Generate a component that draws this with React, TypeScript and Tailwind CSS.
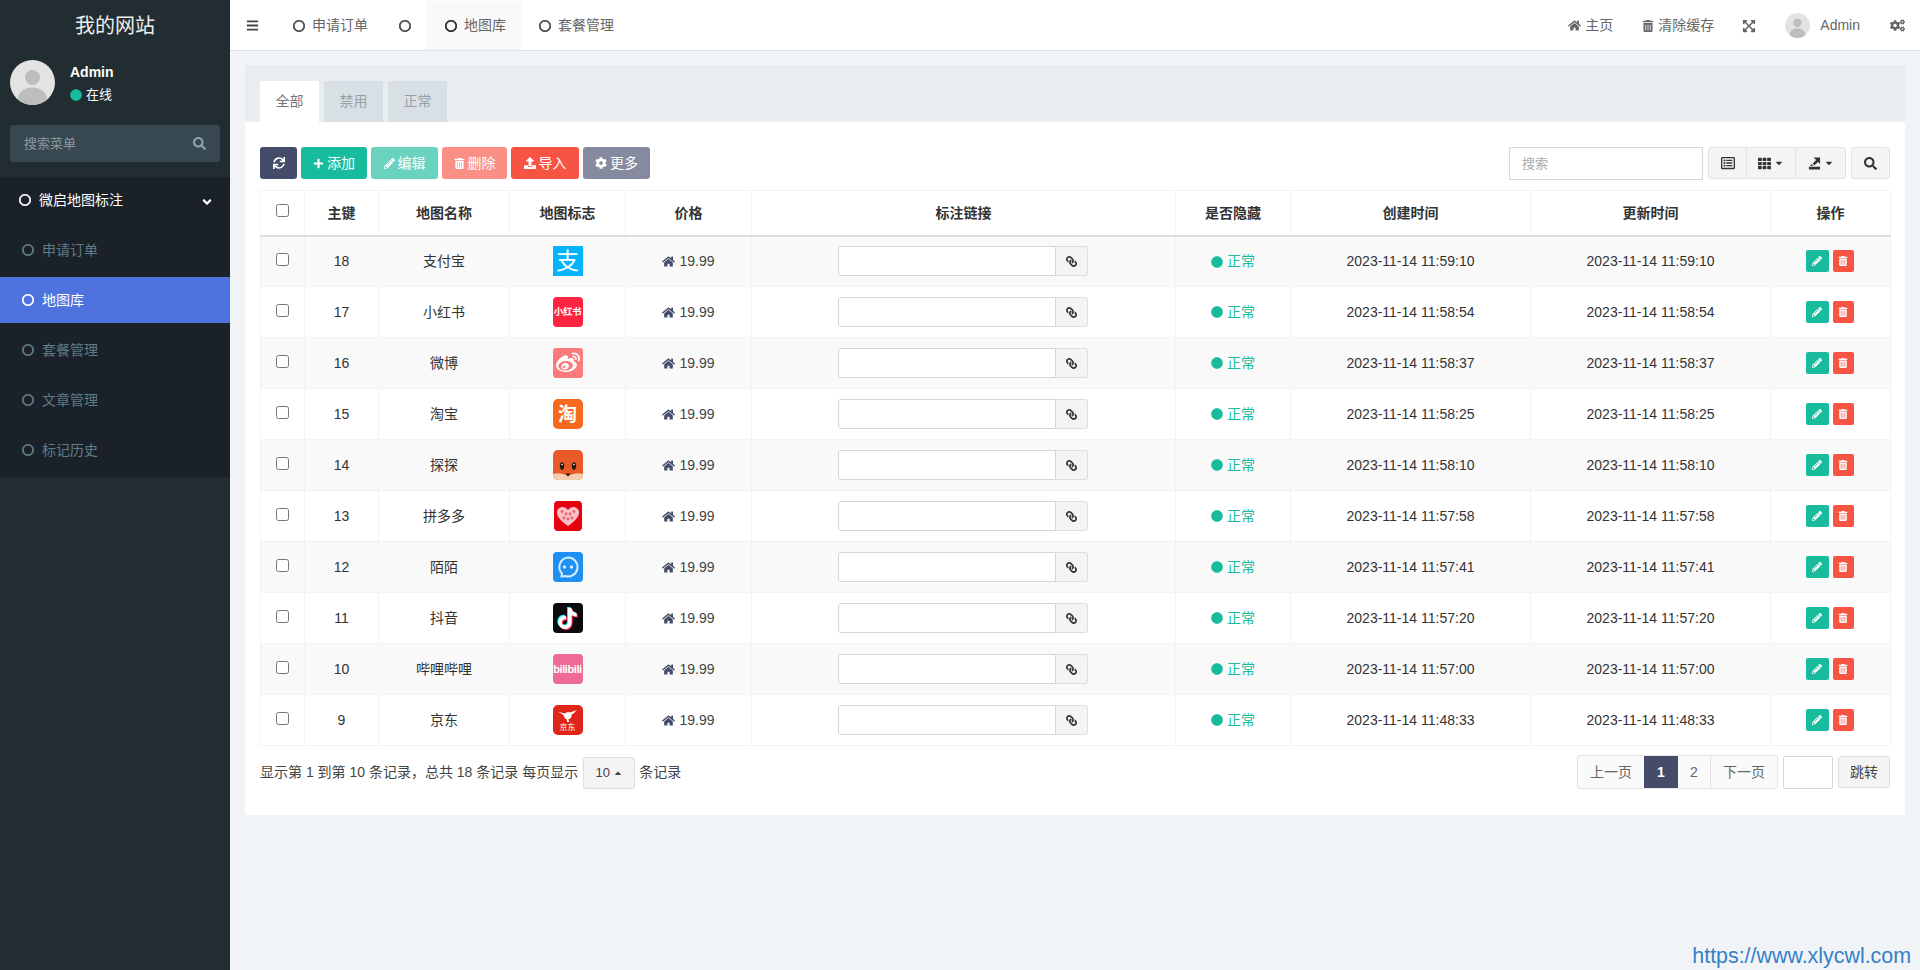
import React from 'react';
import {
  FaAngleDown,
  FaBars,
  FaCaretDown,
  FaCaretUp,
  FaCircle,
  FaCog,
  FaCogs,
  FaExpandArrowsAlt,
  FaHome,
  FaLink,
  FaPencilAlt,
  FaPlus,
  FaRegCircle,
  FaRegListAlt,
  FaSearch,
  FaSync,
  FaTh,
  FaTiktok,
  FaTrashAlt,
  FaUpload,
  FaWeibo,
} from 'react-icons/fa';

const subMenu = ['申请订单', '地图库', '套餐管理', '文章管理', '标记历史'];

const rows = [
  { id: 18, name: '支付宝', logo: 'alipay', time: '2023-11-14 11:59:10' },
  { id: 17, name: '小红书', logo: 'xhs', time: '2023-11-14 11:58:54' },
  { id: 16, name: '微博', logo: 'weibo', time: '2023-11-14 11:58:37' },
  { id: 15, name: '淘宝', logo: 'taobao', time: '2023-11-14 11:58:25' },
  { id: 14, name: '探探', logo: 'tantan', time: '2023-11-14 11:58:10' },
  { id: 13, name: '拼多多', logo: 'pdd', time: '2023-11-14 11:57:58' },
  { id: 12, name: '陌陌', logo: 'momo', time: '2023-11-14 11:57:41' },
  { id: 11, name: '抖音', logo: 'douyin', time: '2023-11-14 11:57:20' },
  { id: 10, name: '哔哩哔哩', logo: 'bili', time: '2023-11-14 11:57:00' },
  { id: 9, name: '京东', logo: 'jd', time: '2023-11-14 11:48:33' },
];

function Avatar({ className }: { className: string }) {
  return (
    <svg viewBox="0 0 45 45" className={`rounded-full shrink-0 ${className}`}>
      <rect width="45" height="45" fill="#e3e3e3" />
      <circle cx="22.5" cy="17.5" r="7.5" fill="#bdbdbd" />
      <ellipse cx="22.5" cy="39" rx="14.5" ry="11.5" fill="#bdbdbd" />
    </svg>
  );
}

function ExportIcon() {
  return (
    <svg viewBox="0 0 14 14" className="w-[13px] h-[14px]" fill="#333">
      <path d="M1 11h12v3H1z" />
      <path d="M6 1h7v7l-2.2-2.2L7 9.5 5 7.5l3.8-3.8z" />
      <path d="M2 10l2-2 2 2z" />
    </svg>
  );
}

function Logo({ type }: { type: string }) {
  const box = 'w-[30px] h-[30px] mx-auto flex items-center justify-center text-white overflow-hidden';
  if (type === 'alipay') {
    return <div className={`${box} bg-[#06b4fd] text-[23px] leading-none`}>支</div>;
  }
  if (type === 'xhs') {
    return <div className={`${box} bg-[#ff2442] rounded-[4px] text-[9.5px] font-bold tracking-[-0.3px]`}>小红书</div>;
  }
  if (type === 'weibo') {
    return (
      <div className={`${box} bg-[#fb7b7d] rounded-[3px]`}>
        <FaWeibo size={24} />
      </div>
    );
  }
  if (type === 'taobao') {
    return <div className={`${box} bg-[#f7691e] rounded-[5px] text-[19px] font-bold leading-none`}>淘</div>;
  }
  if (type === 'tantan') {
    return (
      <svg viewBox="0 0 30 30" className="w-[30px] h-[30px] mx-auto rounded-[5px]">
        <rect width="30" height="30" fill="#e95a28" />
        <path d="M0 24 Q8 22 15 26 Q22 22 30 24 L30 30 L0 30Z" fill="#f2cfae" />
        <ellipse cx="9" cy="16" rx="2.2" ry="3.8" fill="#2c1a14" />
        <ellipse cx="21" cy="16" rx="2.2" ry="3.8" fill="#2c1a14" />
        <circle cx="9" cy="14.5" r="0.8" fill="#fff" />
        <circle cx="21" cy="14.5" r="0.8" fill="#fff" />
        <path d="M12.5 23.5 h5 l-2.5 3z" fill="#2c1a14" />
      </svg>
    );
  }
  if (type === 'pdd') {
    return (
      <svg viewBox="0 0 28 30" className="w-[28px] h-[30px] mx-auto rounded-[4px]">
        <rect width="28" height="30" fill="#e60012" />
        <path d="M14 25 C7 20 3 16 3 11.5 C3 8 6 6 8.5 6 C11 6 13 7.5 14 9 C15 7.5 17 6 19.5 6 C22 6 25 8 25 11.5 C25 16 21 20 14 25Z" fill="#f7c0c6" />
        <circle cx="8" cy="10.5" r="1.4" fill="#e60012" opacity="0.5" />
        <circle cx="12" cy="13" r="1.4" fill="#e60012" opacity="0.5" />
        <circle cx="16" cy="13" r="1.4" fill="#e60012" opacity="0.5" />
        <circle cx="20" cy="10.5" r="1.4" fill="#e60012" opacity="0.5" />
        <circle cx="10" cy="17" r="1.4" fill="#e60012" opacity="0.5" />
        <circle cx="14" cy="18" r="1.4" fill="#e60012" opacity="0.5" />
        <circle cx="18" cy="17" r="1.4" fill="#e60012" opacity="0.5" />
      </svg>
    );
  }
  if (type === 'momo') {
    return (
      <svg viewBox="0 0 30 30" className="w-[30px] h-[30px] mx-auto rounded-[4px]">
        <rect width="30" height="30" fill="#1e90f2" />
        <path d="M15 5.5 a9.5 9.5 0 1 1 -3 18.5 l-3.5 0.5 l0.5 -3 A9.5 9.5 0 0 1 15 5.5z" fill="none" stroke="#d5ecff" strokeWidth="2" />
        <circle cx="11.5" cy="15" r="1.7" fill="#d5ecff" />
        <circle cx="18.5" cy="15" r="1.7" fill="#d5ecff" />
      </svg>
    );
  }
  if (type === 'douyin') {
    return (
      <div className={`${box} bg-[#0b0b0f] rounded-[4px] relative`}>
        <FaTiktok size={21} className="absolute text-[#25f4ee] left-[3.5px] top-[3.5px]" />
        <FaTiktok size={21} className="absolute text-[#fe2c55] left-[5.5px] top-[5.5px]" />
        <FaTiktok size={21} className="absolute text-white left-[4.5px] top-[4.5px]" />
      </div>
    );
  }
  if (type === 'bili') {
    return (
      <div className={`${box} bg-[#ee6b95] rounded-[4px] text-[11px] font-bold tracking-[-0.4px] text-[#fbdde7]`}>
        bilibili
      </div>
    );
  }
  return (
    <div className={`${box} flex-col bg-[#e1251b] rounded-[5px]`}>
      <svg viewBox="0 0 22 14" className="w-[19px] h-[12px] mt-[2px]" fill="#fff">
        <path d="M0 2 L8 4 Q11 1 14 3 L22 0 L18 4 L16 5 Q16 10 12 11 L13 14 L10.5 14 L10 11 Q7 10 7 7 L5 5z" />
      </svg>
      <span className="text-[8px] leading-[10px] mt-[1px]">京东</span>
    </div>
  );
}

export default function App() {
  return (
    <div className="relative flex h-screen overflow-hidden bg-[#f1f4f6] text-[14px] text-[#333] [font-family:'Liberation_Sans','Noto_Sans_CJK_SC',sans-serif]">
      {/* Sidebar */}
      <aside className="w-[230px] shrink-0 bg-[#222d32] flex flex-col">
        <div className="h-[50px] pt-[1px] flex items-center justify-center text-[20px] text-[#eee]">我的网站</div>

        <div className="flex items-start h-[62px] pl-[10px] pt-[10px]">
          <Avatar className="w-[45px] h-[45px]" />
          <div className="ml-[15px] pt-[2px] text-white">
            <div className="font-bold text-[14px] leading-[20px]">Admin</div>
            <div className="flex items-center text-[13px] leading-[20px] mt-[3px]">
              <FaCircle size={12} className="text-[#18bc9c] mr-[4px]" />
              在线
            </div>
          </div>
        </div>

        <div className="mx-[10px] mt-[13px] h-[37px] rounded-[3px] bg-[#374850] flex items-center justify-between px-[14px] text-[13px] text-[#8a9aa2]">
          <span>搜索菜单</span>
          <FaSearch size={13} className="text-[#94a3aa]" />
        </div>

        <nav className="mt-[15px] bg-[#1a2128] pb-[4px]">
          <div className="h-[46px] flex items-center pl-[19px] pr-[16px] text-white text-[14px]">
            <FaRegCircle size={12} className="mr-[8px] stroke-[30]" />
            <span className="flex-1">微启地图标注</span>
            <FaAngleDown size={14} className="mt-[4px]" />
          </div>
          <div className="flex flex-col gap-[4px] mt-[4px]">
            {subMenu.map(item => {
              const active = item === '地图库';
              return (
                <div
                  key={item}
                  className={`h-[46px] flex items-center pl-[22px] ${
                    active ? 'bg-[#4e73df] text-white' : 'text-[#5f7d88]'
                  }`}
                >
                  <FaRegCircle size={12} className="mr-[8px] stroke-[30]" />
                  {item}
                </div>
              );
            })}
          </div>
        </nav>
      </aside>

      <div className="flex-1 flex flex-col min-w-0">
        {/* Top bar */}
        <header className="h-[51px] shrink-0 bg-white border-b border-[#dfe3e6] flex items-center text-[#666]">
          <div className="w-[45px] pl-[16px] text-[#444]">
            <FaBars size={13} />
          </div>
          <div className="flex h-full pt-[1px]">
            <div className="flex items-center pl-[18px] pr-[15px]">
              <FaRegCircle size={12} className="mr-[7px] text-[#444] stroke-[30]" />
              申请订单
            </div>
            <div className="flex items-center pl-[16px] pr-[15px]">
              <FaRegCircle size={12} className="text-[#444] stroke-[30]" />
            </div>
            <div className="flex items-center pl-[19px] pr-[15px] bg-[#f9f9f9]">
              <FaRegCircle size={12} className="mr-[7px] text-[#222] stroke-[30]" />
              地图库
            </div>
            <div className="flex items-center pl-[18px] pr-[15px]">
              <FaRegCircle size={12} className="mr-[7px] text-[#444] stroke-[30]" />
              套餐管理
            </div>
          </div>
          <div className="ml-auto flex items-center pr-[15px] pt-[1px]">
            <FaHome size={13} className="mr-[4px]" />
            主页
            <FaTrashAlt size={12} className="ml-[29px] mr-[4px]" />
            清除缓存
            <FaExpandArrowsAlt size={14} className="ml-[28px]" />
            <Avatar className="w-[25px] h-[25px] ml-[29px]" />
            <span className="ml-[10px]">Admin</span>
            <FaCogs size={15} className="ml-[30px]" />
          </div>
        </header>

        {/* Content */}
        <main className="p-[15px] pt-[14px]">
          <div className="bg-white rounded-[2px] h-[750px] flex flex-col">
            <div className="h-[57px] bg-[#e8edf0] pl-[15px] flex items-end gap-[5px] text-[14px]">
              <div className="w-[59px] h-[41px] bg-white text-[#777] flex items-center justify-center">全部</div>
              <div className="w-[59px] h-[41px] bg-[#d8e0e5] text-[#95a1a8] flex items-center justify-center">禁用</div>
              <div className="w-[59px] h-[41px] bg-[#d8e0e5] text-[#95a1a8] flex items-center justify-center">正常</div>
            </div>

            <div className="px-[15px] pt-[25px]">
              {/* Toolbar */}
              <div className="flex items-start h-[33px] gap-[4px] text-white">
                <button className="w-[37px] h-[32px] rounded-[3px] bg-[#444c69] flex items-center justify-center">
                  <FaSync size={12} />
                </button>
                <button className="w-[66px] h-[32px] rounded-[3px] bg-[#18bc9c] flex items-center justify-center gap-[3px]">
                  <FaPlus size={11} />
                  添加
                </button>
                <button className="w-[67px] h-[32px] rounded-[3px] bg-[#18bc9c]/65 flex items-center justify-center gap-[3px]">
                  <FaPencilAlt size={11} />
                  编辑
                </button>
                <button className="w-[65px] h-[32px] rounded-[3px] bg-[#f75444]/65 flex items-center justify-center gap-[3px]">
                  <FaTrashAlt size={11} />
                  删除
                </button>
                <button className="w-[68px] h-[32px] rounded-[3px] bg-[#f75444] flex items-center justify-center gap-[3px]">
                  <FaUpload size={12} />
                  导入
                </button>
                <button className="w-[67px] h-[32px] rounded-[3px] bg-[#858a9e] flex items-center justify-center gap-[3px]">
                  <FaCog size={12} />
                  更多
                </button>

                <input
                  placeholder="搜索"
                  className="ml-auto w-[194px] h-[33px] border border-[#d2d6de] px-[12px] text-[13px] outline-none placeholder:text-[#aaa]"
                />
                <div className="flex h-[32px] ml-[1px] rounded-[3px] border border-[#e3e3e3] bg-[#f4f4f4] text-[#333]">
                  <div className="w-[38px] flex items-center justify-center border-r border-[#e3e3e3]">
                    <FaRegListAlt size={14} />
                  </div>
                  <div className="w-[49px] flex items-center justify-center gap-[3px] border-r border-[#e3e3e3]">
                    <FaTh size={13} />
                    <FaCaretDown size={10} />
                  </div>
                  <div className="w-[49px] flex items-center justify-center gap-[3px]">
                    <ExportIcon />
                    <FaCaretDown size={10} />
                  </div>
                </div>
                <button className="w-[39px] h-[32px] ml-[1px] rounded-[3px] border border-[#e3e3e3] bg-[#f4f4f4] text-[#333] flex items-center justify-center">
                  <FaSearch size={13} />
                </button>
              </div>

              {/* Table */}
              <table className="mt-[10px] w-[1630px] table-fixed border-collapse border border-[#f4f4f4]">
                <colgroup>
                  <col className="w-[44px]" />
                  <col className="w-[74px]" />
                  <col className="w-[131px]" />
                  <col className="w-[116px]" />
                  <col className="w-[126px]" />
                  <col className="w-[424px]" />
                  <col className="w-[115px]" />
                  <col className="w-[240px]" />
                  <col className="w-[240px]" />
                  <col className="w-[120px]" />
                </colgroup>
                <thead>
                  <tr className="h-[45px] border-b-2 border-[#ddd] font-bold text-center">
                    <th className="border-r border-[#f4f4f4]">
                      <input type="checkbox" className="block mx-auto w-[13px] h-[13px] mb-[4px]" />
                    </th>
                    {['主键', '地图名称', '地图标志', '价格', '标注链接', '是否隐藏', '创建时间', '更新时间', '操作'].map(title => (
                      <th key={title} className="border-r border-[#f4f4f4] pt-[1px]">
                        {title}
                      </th>
                    ))}
                  </tr>
                </thead>
                <tbody>
                  {rows.map((row, i) => (
                    <tr key={row.id} className={`h-[51px] text-center border-b border-[#f4f4f4] ${i % 2 === 0 ? 'bg-[#f9f9f9]' : 'bg-white'}`}>
                      <td className="border-r border-[#f4f4f4]">
                        <input type="checkbox" className="block mx-auto w-[13px] h-[13px] mb-[4px]" />
                      </td>
                      <td className="border-r border-[#f4f4f4]">{row.id}</td>
                      <td className="border-r border-[#f4f4f4]">{row.name}</td>
                      <td className="border-r border-[#f4f4f4]">
                        <Logo type={row.logo} />
                      </td>
                      <td className="border-r border-[#f4f4f4]">
                        <span className="inline-flex items-center text-[#444] pt-[2px]">
                          <FaHome size={13} className="mr-[4px] text-[#444c69]" />
                          19.99
                        </span>
                      </td>
                      <td className="border-r border-[#f4f4f4]">
                        <div className="flex justify-center h-[30px] pr-[2px]">
                          <div className="w-[218px] border border-[#d2d6de] bg-white rounded-l-[3px]" />
                          <div className="w-[32px] border border-l-0 border-[#ddd] bg-[#f4f4f4] rounded-r-[3px] flex items-center justify-center text-[#333]">
                            <FaLink size={11} className="-scale-x-100" />
                          </div>
                        </div>
                      </td>
                      <td className="border-r border-[#f4f4f4]">
                        <span className="inline-flex items-center text-[#18bc9c] pt-[2px]">
                          <FaCircle size={12} className="mr-[4px]" />
                          正常
                        </span>
                      </td>
                      <td className="border-r border-[#f4f4f4]">{row.time}</td>
                      <td className="border-r border-[#f4f4f4]">{row.time}</td>
                      <td>
                        <div className="flex justify-center gap-[4px] pr-[2px]">
                          <div className="w-[23px] h-[22px] rounded-[2px] bg-[#18bc9c] text-white flex items-center justify-center">
                            <FaPencilAlt size={10} />
                          </div>
                          <div className="w-[21px] h-[22px] rounded-[2px] bg-[#f75444] text-white flex items-center justify-center">
                            <FaTrashAlt size={10} />
                          </div>
                        </div>
                      </td>
                    </tr>
                  ))}
                </tbody>
              </table>

              {/* Footer */}
              <div className="mt-[9px] flex items-center justify-between">
                <div className="flex items-center text-[14px] text-[#444]">
                  显示第 1 到第 10 条记录，总共 18 条记录 每页显示
                  <div className="w-[52px] h-[32px] ml-[5px] mr-[4px] mt-[1px] rounded-[3px] border border-[#ddd] bg-[#f4f4f4] flex items-center justify-center gap-[3px] text-[13px]">
                    10
                    <FaCaretUp size={10} />
                  </div>
                  条记录
                </div>
                <div className="flex items-center text-[#666]">
                  <div className="flex h-[34px] rounded-[3px] border border-[#e3e3e3] bg-[#fafafa]">
                    <div className="w-[66px] flex items-center justify-center">上一页</div>
                    <div className="w-[34px] flex items-center justify-center bg-[#444c69] text-white font-bold">1</div>
                    <div className="w-[33px] flex items-center justify-center border-r border-[#e3e3e3]">2</div>
                    <div className="w-[66px] flex items-center justify-center">下一页</div>
                  </div>
                  <div className="w-[50px] h-[33px] ml-[5px] border border-[#d2d6de] rounded-[2px] bg-white" />
                  <div className="w-[52px] h-[32px] ml-[5px] rounded-[3px] border border-[#ddd] bg-[#f4f4f4] flex items-center justify-center text-[#444]">
                    跳转
                  </div>
                </div>
              </div>
            </div>
          </div>
        </main>
      </div>

      {/* Watermark */}
      <div className="absolute right-[9px] bottom-[0px] text-[21.4px] leading-[28px] text-[#3580c8]">https://www.xlycwl.com</div>
    </div>
  );
}
